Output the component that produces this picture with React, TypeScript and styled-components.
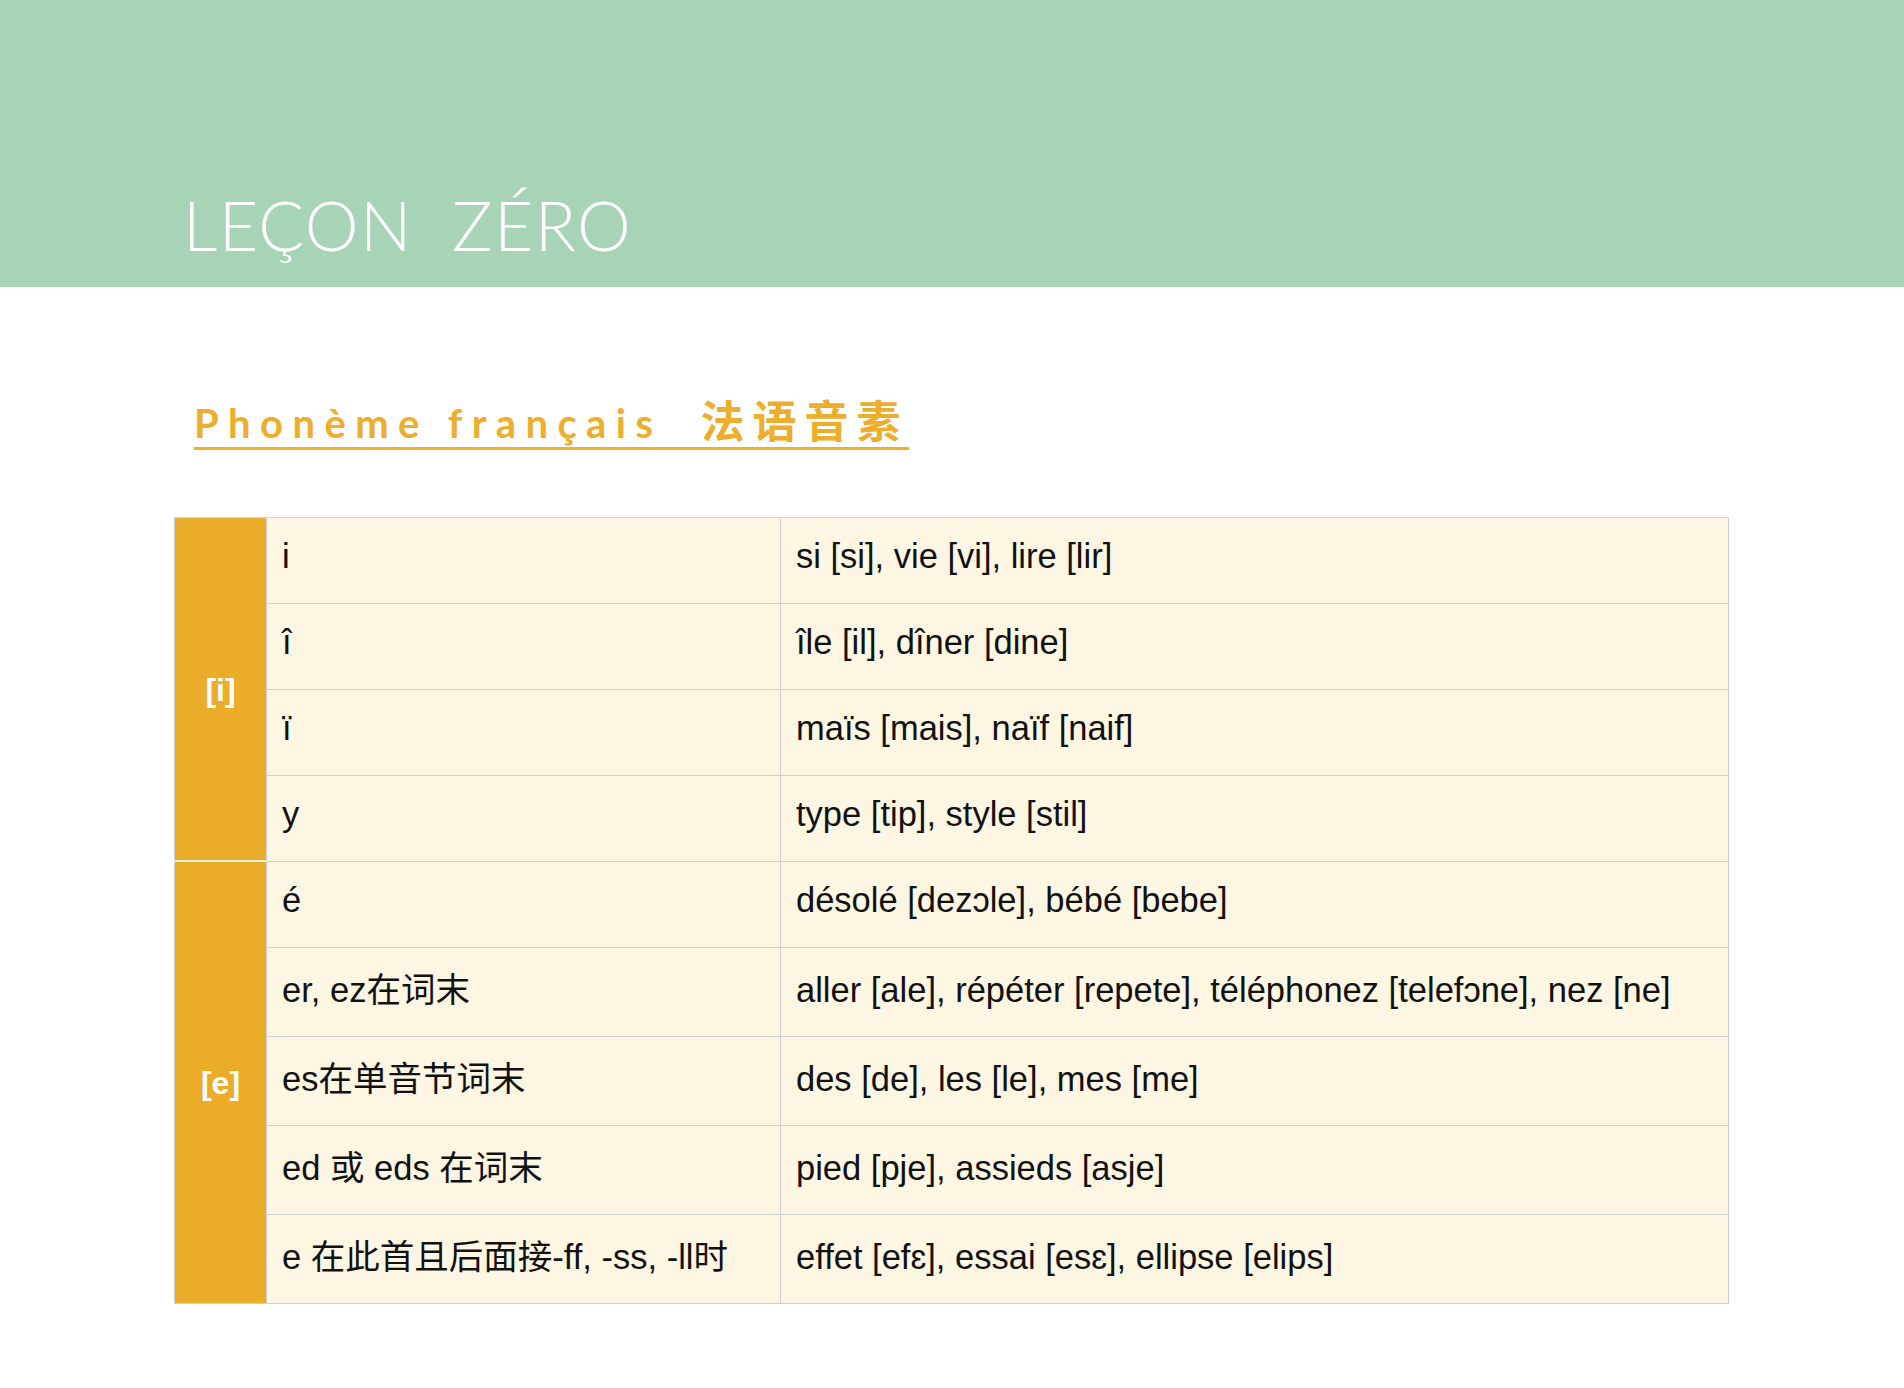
import styled, { createGlobalStyle } from "styled-components";

const GlobalStyle = createGlobalStyle`
  html, body {
    margin: 0;
    padding: 0;
    background: #ffffff;
  }
  body {
    font-family: "Liberation Sans", Arial, "Noto Sans CJK SC", sans-serif;
  }
`;

interface PhonemeRow {
  spelling: string;
  examples: string;
  tall?: boolean;
}

interface PhonemeGroup {
  symbol: string;
  rows: PhonemeRow[];
}

const groups: PhonemeGroup[] = [
  {
    symbol: "[i]",
    rows: [
      { spelling: "i", examples: "si [si], vie [vi], lire [lir]" },
      { spelling: "î", examples: "île [il], dîner [dine]" },
      { spelling: "ï", examples: "maïs [mais], naïf [naif]" },
      { spelling: "y", examples: "type [tip], style [stil]" },
    ],
  },
  {
    symbol: "[e]",
    rows: [
      { spelling: "é", examples: "désolé [dezɔle], bébé [bebe]" },
      {
        spelling: "er, ez在词末",
        examples:
          "aller [ale], répéter [repete], téléphonez [telefɔne], nez [ne]",
        tall: true,
      },
      {
        spelling: "es在单音节词末",
        examples: "des [de], les [le], mes [me]",
        tall: true,
      },
      {
        spelling: "ed 或 eds 在词末",
        examples: "pied [pje], assieds [asje]",
        tall: true,
      },
      {
        spelling: "e 在此首且后面接-ff, -ss, -ll时",
        examples: "effet [efɛ], essai [esɛ], ellipse [elips]",
        tall: true,
      },
    ],
  },
];

const App = () => {
  const rowHeights = groups
    .flatMap((g) => g.rows)
    .map((r) => (r.tall ? "89px" : "86px"))
    .join(" ");

  let rowIndex = 0;

  return (
    <>
      <GlobalStyle />
      <Banner>
        <Title>LEÇON&nbsp; ZÉRO</Title>
      </Banner>

      <Content>
        <Subtitle>
          Phonème français&nbsp; <Cjk>法语音素</Cjk>
        </Subtitle>

        <Table style={{ gridTemplateRows: rowHeights }}>
          {groups.map((group, gi) => {
            const start = rowIndex + 1;
            rowIndex += group.rows.length;
            return [
              <SymbolCell
                key={`s${gi}`}
                $last={gi === groups.length - 1}
                style={{ gridRow: `${start} / span ${group.rows.length}` }}
              >
                {group.symbol}
              </SymbolCell>,
              ...group.rows.map((row, ri) => [
                <Cell
                  key={`a${gi}-${ri}`}
                  $tall={!!row.tall}
                  style={{ gridRow: start + ri, gridColumn: 2 }}
                >
                  {row.spelling}
                </Cell>,
                <Cell
                  key={`b${gi}-${ri}`}
                  $tall={!!row.tall}
                  style={{ gridRow: start + ri, gridColumn: 3 }}
                >
                  {row.examples}
                </Cell>,
              ]),
            ];
          })}
        </Table>
      </Content>
    </>
  );
};

export default App;

const Banner = styled.header`
  height: 287px;
  background: #a7d4b6;
  box-sizing: border-box;
  padding: 191px 0 0 183px;
`;

const Title = styled.h1`
  margin: 0;
  font-family: Lato, "Open Sans", sans-serif;
  font-weight: 300;
  font-size: 68px;
  line-height: 68px;
  color: #ffffff;
  letter-spacing: 1.3px;
`;

const Content = styled.main`
  display: flex;
  flex-direction: column;
  align-items: flex-start;
  padding: 112px 0 0 174px;
`;

const Subtitle = styled.h2`
  display: inline-block;
  margin: 0 0 0 20px;
  padding-bottom: 4px;
  border-bottom: 3px solid #ecae2c;
  font-family: Lato, "Noto Sans CJK SC", sans-serif;
  font-weight: 700;
  font-size: 40px;
  line-height: 40px;
  letter-spacing: 9.4px;
  color: #ecae2c;
`;

const Cjk = styled.span`
  font-family: "Noto Sans CJK SC", sans-serif;
  font-size: 44px;
  letter-spacing: 8px;
`;

const Table = styled.div`
  display: grid;
  grid-template-columns: 92px 514px 948px;
  margin-top: 67px;
  border-top: 1px solid #d3d3d3;
  border-left: 1px solid #cfcfcf;
`;

const SymbolCell = styled.div<{ $last: boolean }>`
  grid-column: 1;
  display: flex;
  align-items: center;
  justify-content: center;
  background: #ebac2a;
  border-right: 1px solid #cfcfcf;
  border-bottom: ${({ $last }) =>
    $last ? "1px solid #cfcfcf" : "2px solid #fbf1dc"};
  color: #ffffff;
  font-weight: 700;
  font-size: 32px;
  padding-top: 2px;
  box-sizing: border-box;
`;

const Cell = styled.div<{ $tall: boolean }>`
  background: #fdf6e3;
  border-right: 1px solid #cfcfcf;
  border-bottom: 1px solid #cfcfcf;
  padding: ${({ $tall }) => ($tall ? "22px" : "18px")} 14px 0 15px;
  font-family: "Liberation Sans", Arial, "Noto Sans CJK SC", sans-serif;
  font-size: 34.5px;
  line-height: 40px;
  color: #111111;
  white-space: nowrap;
  box-sizing: border-box;
`;
